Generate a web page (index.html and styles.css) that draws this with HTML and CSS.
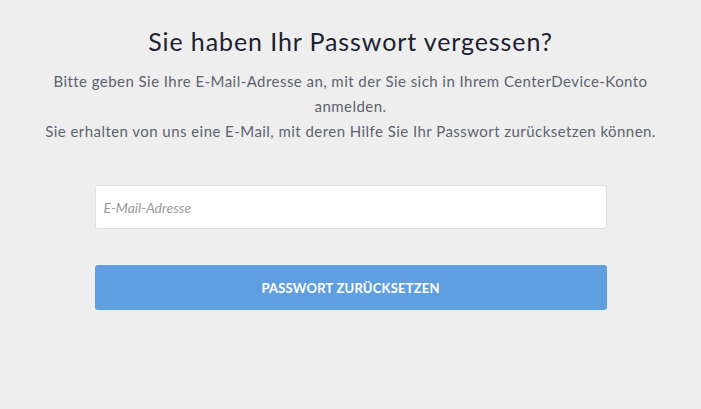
FILE: index.html
```html
<!DOCTYPE html>
<html lang="de">
<head>
<meta charset="utf-8">
<title>Passwort vergessen</title>
<link rel="stylesheet" href="styles.css">
</head>
<body>
<main class="page">
  <h1 class="title">Sie haben Ihr Passwort vergessen?</h1>
  <p class="intro">Bitte geben Sie Ihre E-Mail-Adresse an, mit der Sie sich in Ihrem CenterDevice-Konto anmelden.<br>Sie erhalten von uns eine E-Mail, mit deren Hilfe Sie Ihr Passwort zurücksetzen können.</p>
  <form class="form">
    <input class="field" type="email" placeholder="E-Mail-Adresse">
    <button class="submit" type="button">PASSWORT ZURÜCKSETZEN</button>
  </form>
</main>
</body>
</html>
```

FILE: styles.css
```css
html, body {
  margin: 0;
  padding: 0;
  background: #eeeeee;
  height: 100%;
}
body {
  font-family: Lato, "Open Sans", sans-serif;
}
.page {
  padding: 25px 30px 0;
  display: flex;
  flex-direction: column;
  align-items: center;
}
.title {
  margin: 0;
  font-size: 25px;
  font-weight: 400;
  color: #1d2130;
  line-height: 32px;
  letter-spacing: 0.9px;
}
.intro {
  margin: 12px 0 0;
  font-size: 15px;
  line-height: 25px;
  color: #5c636e;
  text-align: center;
  letter-spacing: 0.45px;
}
.form {
  width: 512px;
  margin-top: 41px;
  display: flex;
  flex-direction: column;
  gap: 36px;
}
.field {
  box-sizing: border-box;
  height: 44px;
  margin: 0;
  padding: 0 8px;
  border: 1px solid #dcdfe3;
  border-radius: 3px;
  background: #ffffff;
  font-family: Lato, sans-serif;
  font-size: 14px;
  color: #333;
  outline: none;
}
.field::placeholder {
  color: #9a9a9a;
  font-style: italic;
}
.submit {
  height: 45px;
  margin: 0;
  border: none;
  border-radius: 3px;
  background: #5f9fdf;
  color: #ffffff;
  font-family: Lato, sans-serif;
  font-weight: 700;
  font-size: 13px;
  letter-spacing: 0.2px;
}
```
